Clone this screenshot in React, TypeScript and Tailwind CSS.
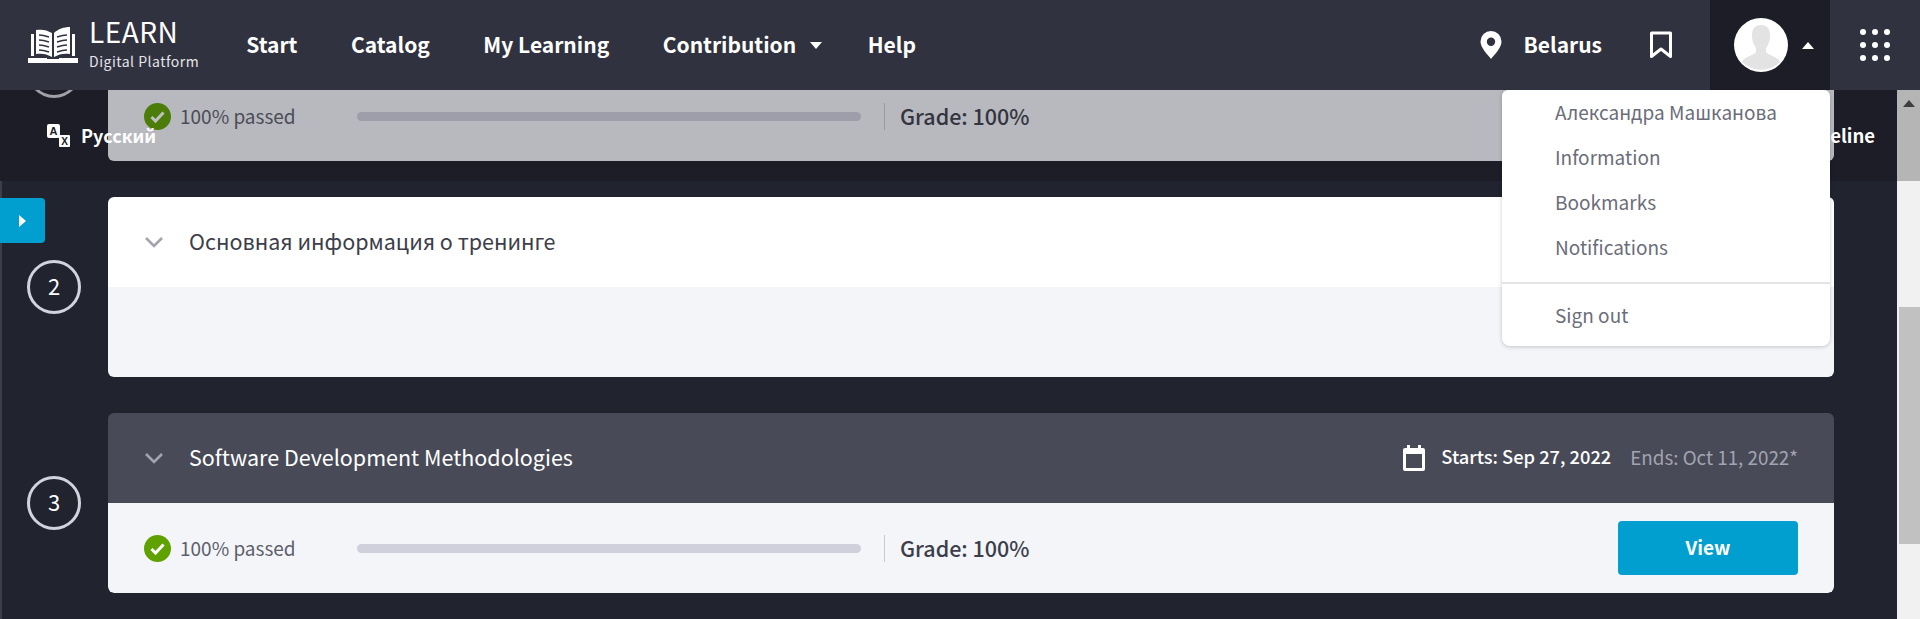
import React from 'react'

const font = { fontFamily: '"Noto Sans CJK JP", "Noto Sans", sans-serif' }

const LogoIcon = () => (
  <svg width="52" height="38" viewBox="0 0 52 38" fill="none" className="shrink-0">
    <path d="M4 8h3v22H4zM45 8h3v22h-3z" fill="#fff" />
    <path d="M9 4c6-1 11 0 16 3v24c-5-3-10-4-16-3z" fill="#fff" />
    <path d="M43 1c-6 0-12 2-16 6v24c5-3 10-4 16-3z" fill="#fff" />
    <path d="M12 9c3 0 7 1 10 2M12 14c3 0 7 1 10 2M12 19c3 0 7 1 10 2M12 24c3 0 7 1 10 2M30 11c3-1 7-2 10-2M30 16c3-1 7-2 10-2M30 21c3-1 7-2 10-2M30 26c3-1 7-2 10-2" stroke="#31323f" strokeWidth="1.6" />
    <path d="M1 32h19v1h12v-1h19v5H1z" fill="#fff" />
  </svg>
)

const CaretDown = () => (
  <svg width="12" height="7" viewBox="0 0 12 7"><path d="M0 0h12L6 7z" fill="#fff" /></svg>
)

const CaretUp = () => (
  <svg width="12" height="7" viewBox="0 0 12 7"><path d="M0 7h12L6 0z" fill="#fff" /></svg>
)

const Chevron = () => (
  <svg width="20" height="12" viewBox="0 0 20 12" fill="none" className="shrink-0">
    <path d="M2 2l8 8 8-8" stroke="#a3a4b0" strokeWidth="2.6" />
  </svg>
)

const CheckCircle = () => (
  <svg width="27" height="27" viewBox="0 0 27 27" className="shrink-0">
    <circle cx="13.5" cy="13.5" r="13.5" fill="#5fa200" />
    <path d="M7.5 14l4 4 8-8.5" fill="none" stroke="#fff" strokeWidth="3" />
  </svg>
)

const TranslateIcon = () => (
  <svg width="23" height="23" viewBox="0 0 23 23" className="shrink-0">
    <rect x="0" y="0" width="13" height="14" rx="2" fill="#fff" />
    <text x="6.5" y="11" textAnchor="middle" fontSize="11" fontWeight="700" fill="#1c1d26" fontFamily="Liberation Sans">A</text>
    <rect x="12" y="11" width="11" height="12" rx="1" fill="#fff" />
    <text x="17.5" y="21" textAnchor="middle" fontSize="10" fontWeight="700" fill="#1c1d26" fontFamily="Liberation Sans">X</text>
  </svg>
)

const Avatar = () => (
  <svg width="54" height="54" viewBox="0 0 54 54">
    <circle cx="27" cy="27" r="27" fill="#fff" />
    <path d="M27 7c6 0 9 4 9 10 0 5-1 9-4 13v4c2 3 9 4 13 8l1 2a27 27 0 0 1-38 0l1-2c4-4 11-5 13-8v-4c-3-4-4-8-4-13 0-6 3-10 9-10z" fill="#e3e3e3" />
  </svg>
)

const Step = ({ n }: { n?: number }) => (
  <div className="w-[54px] h-[54px] shrink-0 rounded-full border-[3px] border-[#d2d3dc] flex items-center justify-center text-white text-[22px] pb-[3px]">
    {n}
  </div>
)

const Progress = () => (
  <div className="flex items-center h-[90px] px-9 bg-[#f4f5f9] rounded-b-md">
    <CheckCircle />
    <span className="ml-[9px] w-[177px] text-[19px] text-[#5d5f6b] whitespace-nowrap">100% passed</span>
    <div className="w-[504px] h-[9px] rounded-full bg-[#cfd0dc]" />
    <div className="ml-[23px] w-px h-[27px] bg-[#c9cad3]" />
    <span className="ml-[15px] text-[21.5px] font-medium text-[#3c3e4a]">Grade: 100%</span>
    <button className="ml-auto w-[180px] h-[54px] rounded bg-[#019fcf] text-white text-[19px] font-semibold pb-[2px]">View</button>
  </div>
)

const App = () => {
  return (
    <div style={font} className="relative w-[1920px] h-[619px] overflow-hidden bg-[#21232f] flex flex-col">
      {/* top bar */}
      <header className="relative z-40 h-[90px] shrink-0 bg-[#31323f] flex items-center text-white pl-[27px]">
        <LogoIcon />
        <div className="ml-[10px] flex flex-col -mt-[5px]">
          <span className="text-[28px] leading-[32px] tracking-[0.5px]">LEARN</span>
          <span className="mt-[4px] text-[14px] leading-[20px] tracking-[0.5px] text-[#e4e4ea]">Digital Platform</span>
        </div>
        <nav className="ml-[47px] flex items-center gap-[53.5px] text-[21px] font-semibold">
          <span>Start</span>
          <span>Catalog</span>
          <span>My Learning</span>
          <span className="flex items-center gap-[14px]">Contribution <CaretDown /></span>
          <span className="-ml-[8px]">Help</span>
        </nav>
        <div className="ml-auto flex items-center h-full">
          <svg width="22" height="28" viewBox="0 0 22 28" className="shrink-0">
            <path fillRule="evenodd" d="M11 0a10.5 10.5 0 0 1 10.5 10.5C21.500 17 14 24 11 28 8 24 .5 17 .5 10.500A10.500 10.500 0 0 1 11 0zm0 6.500a4.200 4.200 0 1 0 0 8.400 4.200 4.200 0 0 0 0-8.400z" fill="#fff" />
          </svg>
          <span className="ml-[22px] text-[21px] font-semibold pb-[1px]">Belarus</span>
          <svg width="24" height="28" viewBox="0 0 24 28" fill="none" className="ml-[47px] shrink-0">
            <path d="M2.500 2h19v23.500L12 18l-9.500 7.500z" stroke="#fff" strokeWidth="3" strokeLinejoin="round" />
          </svg>
          <div className="ml-[37px] w-[120px] h-full bg-[#1c1d26] flex items-center pl-6">
            <Avatar />
            <span className="ml-[14px]"><CaretUp /></span>
          </div>
          <div className="w-[90px] flex justify-center">
            <div className="grid grid-cols-3 gap-x-[6px] gap-y-[7px]">
              {Array.from({ length: 9 }).map((_, i) => (
                <span key={i} className="w-[6px] h-[6px] rounded-full bg-white" />
              ))}
            </div>
          </div>
        </div>
      </header>

      {/* course sub bar, no z-index so that its labels can rise over the faded card */}
      <div className="absolute left-0 right-0 top-[90px] h-[91px] bg-[#1c1d26] flex items-center justify-between pl-[47px] pr-[45px] text-white text-[18px] font-semibold">
        <span className="relative z-20 flex items-center gap-[11px]"><TranslateIcon />Русский</span>
        <span className="relative z-20 text-[18.5px]">Timeline</span>
      </div>

      <div className="flex flex-1 min-h-0">
        <main className="flex-1 -mt-[109px] pl-[27px] pr-[63px] flex flex-col gap-9 border-l-2 border-[#3c3e4a]">
          <section className="relative z-10 opacity-[0.72] flex items-center gap-[27px] -ml-[2px]">
            <Step />
            <div className="flex-1 rounded-md">
              <div className="h-[90px]" />
              <Progress />
            </div>
          </section>

          <section className="flex items-center gap-[27px] -ml-[2px]">
            <Step n={2} />
            <div className="flex-1 rounded-md overflow-hidden">
              <div className="h-[90px] bg-white flex items-center pl-9 gap-[25px] text-[#3c3e4a] text-[21.5px]">
                <Chevron />
                <span className="pb-[2px]">Основная информация о тренинге</span>
              </div>
              <div className="h-[90px] bg-[#f4f5f9]" />
            </div>
          </section>

          <section className="flex items-center gap-[27px] -ml-[2px]">
            <Step n={3} />
            <div className="flex-1 rounded-md overflow-hidden">
              <div className="h-[90px] bg-[#484a58] flex items-center pl-9 pr-9 gap-[25px] text-white text-[21.5px]">
                <Chevron />
                <span className="pb-[2px]">Software Development Methodologies</span>
                <div className="ml-auto flex items-center text-[18.3px] font-medium">
                  <svg width="22" height="26" viewBox="0 0 22 26" className="shrink-0">
                    <path fillRule="evenodd" d="M4 0h3v3h8V0h3v3h2a2 2 0 0 1 2 2v19a2 2 0 0 1-2 2H2a2 2 0 0 1-2-2V5a2 2 0 0 1 2-2h2zM3 9v14h16V9z" fill="#fff" />
                  </svg>
                  <span className="ml-[16px] pb-[2px]">Starts: Sep 27, 2022</span>
                  <span className="ml-[19px] pb-[2px] text-[18.8px] font-normal text-[#a3a4b0]">Ends: Oct 11, 2022*</span>
                </div>
              </div>
              <Progress />
            </div>
          </section>
        </main>

        {/* scrollbar */}
        <aside className="relative z-30 w-[23px] shrink-0 bg-[#f1f1f1] pl-[2px] flex flex-col">
          <div className="absolute left-0 right-0 top-0 h-[91px] bg-[#b5b5b5]">
            <svg width="12" height="7" viewBox="0 0 12 7" className="ml-[6px] mt-[10px]"><path d="M0 7h12L6 0z" fill="#3f3f3f" /></svg>
          </div>
          <div className="mt-[217px] h-[237px] bg-[#c1c1c1]" />
        </aside>
      </div>

      {/* profile dropdown */}
      <div className="absolute z-30 left-[1502px] top-[90px] w-[328px] h-[256px] bg-white rounded-b-lg rounded-t-md shadow-[0_1px_4px_rgba(0,0,0,0.2)] text-[19px] text-[#6b6d7a] flex flex-col">
        <div className="flex flex-col pl-[53px]">
          <span className="h-[45px] flex items-center">Александра Машканова</span>
          <span className="h-[45px] flex items-center">Information</span>
          <span className="h-[45px] flex items-center">Bookmarks</span>
          <span className="h-[45px] flex items-center">Notifications</span>
        </div>
        <div className="mt-[12px] h-[2px] bg-[#e3e3e8]" />
        <div className="pl-[53px] flex-1 flex items-center">Sign out</div>
      </div>

      {/* side tab */}
      <div className="absolute left-0 top-[198px] w-[45px] h-[45px] rounded-r bg-[#019fcf] flex items-center justify-center">
        <svg width="7" height="12" viewBox="0 0 7 12"><path d="M0 0l7 6-7 6z" fill="#fff" /></svg>
      </div>
    </div>
  )
}

export default App
